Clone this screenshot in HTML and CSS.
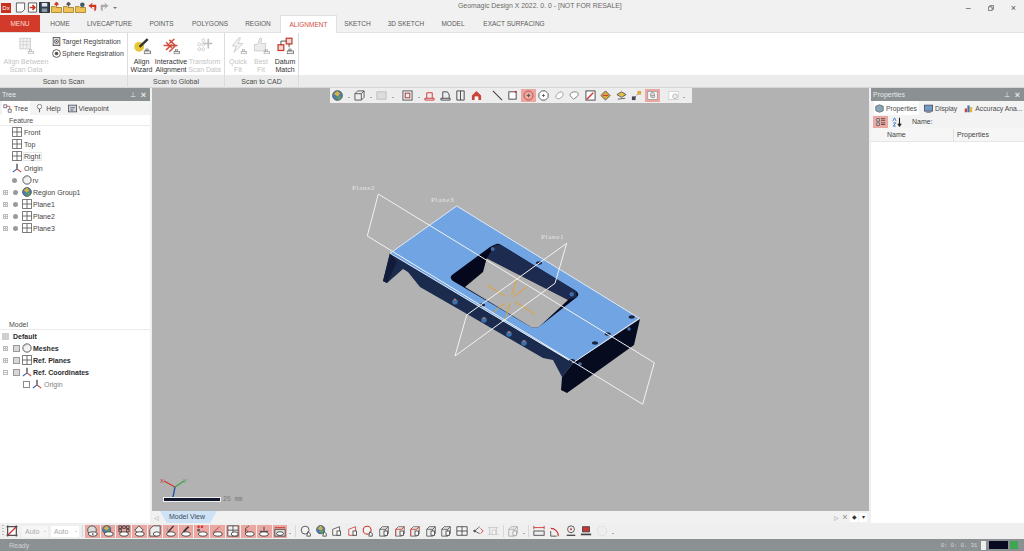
FILE: index.html
```html
<!DOCTYPE html>
<html lang="en">
<head>
<meta charset="utf-8">
<title>Geomagic Design X 2022</title>
<link rel="stylesheet" href="styles.css">
</head>
<body>
<svg class="defs" width="0" height="0" aria-hidden="true">
  <defs>
    <symbol id="plane" viewBox="0 0 12 12"><path d="M.5.5h11v11H.5zM6 .5v11M.5 6h11" fill="none" stroke="#555"/></symbol>
    <symbol id="origin" viewBox="0 0 12 12"><path d="M6 1v6" stroke="#222" stroke-width="1.300"/><path d="M6 7l-5 4" stroke="#2456b0" stroke-width="1.300"/><path d="M6 7l5 4" stroke="#c0392b" stroke-width="1.300"/></symbol>
    <symbol id="sphere" viewBox="0 0 12 12"><circle cx="6" cy="6" r="5" fill="#f2f2f2" stroke="#444"/><path d="M3 4a4 4 0 0 1 3-2" stroke="#aaa" fill="none"/></symbol>
    <symbol id="region" viewBox="0 0 12 12"><circle cx="6" cy="6" r="5.300" fill="#4a7fb0" stroke="#555"/><path d="M2 4l4-3 3 3-3 3z" fill="#d8b23a"/><path d="M5 8l4-2 1 3-3 2z" fill="#5fa05a"/></symbol>
    <symbol id="eye" viewBox="0 0 14 14"><circle cx="7" cy="6" r="5" fill="#ddd" stroke="#444"/><ellipse cx="8" cy="10.500" rx="5" ry="2.500" fill="#fff" stroke="#333"/><circle cx="8" cy="10.500" r="1" fill="#333"/></symbol>
    <symbol id="page" viewBox="0 0 14 14"><path d="M2 5l3-3h7v8l-3 3H2z" fill="#eee" stroke="#555"/><path d="M2 5h7v8M9 5l3-3" fill="none" stroke="#555"/><rect x="7" y="7" width="4" height="5" fill="#fff" stroke="#444"/></symbol>
    <symbol id="pager" viewBox="0 0 14 14"><path d="M2 5l3-3h7v8l-3 3H2z" fill="#eee" stroke="#666"/><path d="M2 5h7l3-3" fill="none" stroke="#d24a3c" stroke-width="1.200"/><path d="M2 5v8" stroke="#d24a3c"/><rect x="7" y="7" width="4" height="5" fill="#fff" stroke="#444"/></symbol>
    <symbol id="loop" viewBox="0 0 14 14"><circle cx="6" cy="6" r="4.600" fill="#f4f4f4" stroke="#444"/><path d="M9 8l3 2v3H8z" fill="#fff" stroke="#444"/></symbol>
    <symbol id="small" viewBox="0 0 10 8"><rect x="3" y=".5" width="3" height="3" fill="#ddd" stroke="#555"/><rect x=".5" y="3.500" width="9" height="4" fill="#eee" stroke="#555"/></symbol>
  </defs>
</svg>
<div class="app">
  <header class="titlebar">
    <div class="qat">
      <span class="logo">Dx</span>
      <svg class="qi" viewBox="0 0 12 12"><path d="M1.500 1h9v7l-3 3h-6z" fill="#fff" stroke="#555"/></svg>
      <svg class="qi" viewBox="0 0 12 12"><path d="M1.500 1h9v10h-9z" fill="#fff" stroke="#555"/><path d="M3 6h5M6 3.500 8.500 6 6 8.500" fill="none" stroke="#c8321f" stroke-width="1.800"/></svg>
      <svg class="qi" viewBox="0 0 12 12"><path d="M.5.500h11v11H.5z" fill="#2c3e50" stroke="#222"/><rect x="3" y="1" width="6" height="4" fill="#dfe6ee"/><rect x="3" y="7" width="6" height="4" fill="#8b98a5"/></svg>
      <svg class="qi" viewBox="0 0 12 12"><path d="M.5 5h4l1 1h6v5.500H.5z" fill="#eec257" stroke="#a9842b"/><path d="M6 5V1M4 3l2-2.500L8 3" fill="none" stroke="#cf3d24" stroke-width="1.600"/></svg>
      <svg class="qi" viewBox="0 0 12 12"><path d="M.5 5h4l1 1h6v5.500H.5z" fill="#eec257" stroke="#a9842b"/><path d="M6 5V1M4 3l2-2.500L8 3" fill="none" stroke="#555" stroke-width="1.600"/></svg>
      <svg class="qi" viewBox="0 0 12 12"><path d="M.5 5h4l1 1h6v5.500H.5z" fill="#eec257" stroke="#a9842b"/><circle cx="8" cy="3" r="2.500" fill="#45586a"/></svg>
      <svg class="qi" viewBox="0 0 12 12"><path d="M10 3H5L6.500.5 1.500 4l5 4L5 5.500h3V10c2 0 2.500-3 2-7z" fill="#d0341f"/></svg>
      <svg class="qi" viewBox="0 0 12 12"><path d="M2 3h5L5.500.5l5 3.500-5 4L7 5.500H4V10C2 10 1.500 7 2 3z" fill="#aaa"/></svg>
      <span class="qdrop"></span>
    </div>
    <div class="apptitle">Geomagic Design X 2022. 0. 0 - [NOT FOR RESALE]</div>
    <div class="winbtns">
      <span>–</span>
      <svg class="restore" viewBox="0 0 8 8"><path d="M.5 2.500h5v5h-5zM2.500 2.500v-2h5v5h-2" fill="none" stroke="#555"/></svg>
      <span>×</span>
    </div>
  </header>

  <nav class="tabs">
    <span class="tab tab-menu">MENU</span>
    <span class="tab t-home">HOME</span>
    <span class="tab t-live">LIVECAPTURE</span>
    <span class="tab t-points">POINTS</span>
    <span class="tab t-poly">POLYGONS</span>
    <span class="tab t-region">REGION</span>
    <span class="tab tab-active">ALIGNMENT</span>
    <span class="tab t-sketch">SKETCH</span>
    <span class="tab t-3d">3D SKETCH</span>
    <span class="tab t-model">MODEL</span>
    <span class="tab t-exact">EXACT SURFACING</span>
  </nav>

  <section class="ribbon">
    <div class="group g-scan">
      <div class="group-body">
        <div class="bigbtn disabled w-between">
          <svg class="bigicon" viewBox="0 0 22 22"><rect x="3.500" y="1.500" width="13" height="13" fill="#f2f2f2" stroke="#c8c8c8"/><path d="M3.500 5.500h13M3.500 9.500h13M7.500 1.500v13M12 1.500v13" stroke="#d2d2d2"/><use href="#small" x="13" y="15" width="8" height="6" opacity=".5"/></svg>
          <span>Align Between<br>Scan Data</span>
        </div>
        <div class="smallcol">
          <div class="smallbtn">
            <svg class="smicon" viewBox="0 0 12 12"><rect x="1.500" y=".5" width="9" height="11" fill="#ddd" stroke="#444"/><circle cx="6" cy="6" r="2.500" fill="#fff" stroke="#333"/><circle cx="6" cy="6" r="1" fill="#333"/></svg>
            <span>Target Registration</span>
          </div>
          <div class="smallbtn">
            <svg class="smicon" viewBox="0 0 12 12"><circle cx="6" cy="6" r="5.200" fill="#fff" stroke="#333"/><circle cx="6" cy="6" r="2.400" fill="#555"/></svg>
            <span>Sphere Registration</span>
          </div>
        </div>
      </div>
      <div class="group-label">Scan to Scan</div>
    </div>

    <div class="group g-global">
      <div class="group-body">
        <div class="bigbtn w-wizard">
          <svg class="bigicon" viewBox="0 0 22 22"><circle cx="7.500" cy="12" r="6" fill="#e8c736"/><path d="M8 12 18 2.500" stroke="#333" stroke-width="3"/><use href="#small" x="13" y="14" width="9" height="7"/></svg>
          <span>Align<br>Wizard</span>
        </div>
        <div class="bigbtn w-inter">
          <svg class="bigicon" viewBox="0 0 22 22"><g fill="none" stroke="#cf4a3c" stroke-width="1.800"><path d="M2 10.500h17M5 6.500 12 13M9 3.500 16 10M5 16 12 9M9 18l7-7M15 2.500 9 8"/></g><use href="#small" x="14" y="15" width="8" height="6"/></svg>
          <span>Interactive<br>Alignment</span>
        </div>
        <div class="bigbtn disabled w-transform">
          <svg class="bigicon" viewBox="0 0 22 22"><g fill="none" stroke="#c6c6c6"><circle cx="4" cy="9" r="1.800"/><circle cx="9" cy="9" r="1.800"/><circle cx="4" cy="15" r="1.800"/><circle cx="9" cy="15" r="1.800"/><circle cx="9" cy="4" r="1.800"/></g><path d="M15 2v12M9 8h11" stroke="#bdbdbd" stroke-width="2"/></svg>
          <span>Transform<br>Scan Data</span>
        </div>
      </div>
      <div class="group-label">Scan to Global</div>
    </div>

    <div class="group g-cad">
      <div class="group-body">
        <div class="bigbtn disabled w-quick">
          <svg class="bigicon" viewBox="0 0 22 22"><path d="M12 1 4 11h5l-3 8 11-11h-6l3-7z" fill="#f3f3f3" stroke="#c8c8c8"/><use href="#small" x="14" y="15" width="8" height="6" opacity=".6"/></svg>
          <span>Quick<br>Fit</span>
        </div>
        <div class="bigbtn disabled w-best">
          <svg class="bigicon" viewBox="0 0 22 22"><path d="M3 9h4l3-8 2 1-1 6h6l-1 9H3z" fill="#ececec" stroke="#c8c8c8"/><use href="#small" x="14" y="15" width="8" height="6" opacity=".6"/></svg>
          <span>Best<br>Fit</span>
        </div>
        <div class="bigbtn w-datum">
          <svg class="bigicon" viewBox="0 0 22 22"><rect x="12.500" y="1.500" width="7" height="7" fill="#f1d9d5" stroke="#c9382a" stroke-width="1.500"/><rect x="2.500" y="9.500" width="7" height="7" fill="#f1d9d5" stroke="#c9382a" stroke-width="1.500"/><path d="M6 9.500V5h6.500M16 8.500v4" fill="none" stroke="#333"/><use href="#small" x="13" y="14" width="9" height="7"/></svg>
          <span>Datum<br>Match</span>
        </div>
      </div>
      <div class="group-label">Scan to CAD</div>
    </div>
    <div class="group g-rest">
      <div class="group-body"></div>
      <div class="group-label"></div>
    </div>
  </section>

  <main class="workspace">
    <aside class="panel panel-left">
      <div class="panel-head"><span>Tree</span><span class="pin">⊥</span><span class="close">×</span></div>
      <div class="panel-tabs">
        <span class="ptab ptab-on"><svg class="pti" viewBox="0 0 12 12"><path d="M1 1h4v4H1zM7 7h4v4H7z" fill="#fff" stroke="#556"/><path d="M5 3h4v4" stroke="#c0392b" fill="none"/></svg>Tree</span>
        <span class="ptab"><svg class="pti" viewBox="0 0 12 12"><circle cx="6" cy="3.500" r="3" fill="#fff" stroke="#666"/><path d="M6 6.500V11" stroke="#666" stroke-width="1.500"/></svg>Help</span>
        <span class="ptab"><svg class="pti" viewBox="0 0 12 12"><rect x=".5" y="1.500" width="11" height="9" fill="#cfd6dc" stroke="#445"/><path d="M3 5h6M3 8h4" stroke="#445"/></svg>Viewpoint</span>
      </div>
      <div class="sec-head">Feature</div>
      <ul class="tree">
        <li class="ind1"><svg class="ti"><use href="#plane"/></svg>Front</li>
        <li class="ind1"><svg class="ti"><use href="#plane"/></svg>Top</li>
        <li class="ind1"><svg class="ti"><use href="#plane"/></svg><span class="sel">Right</span></li>
        <li class="ind1"><svg class="ti"><use href="#origin"/></svg>Origin</li>
        <li class="ind2"><i class="dot"></i><svg class="ti"><use href="#sphere"/></svg>rv</li>
        <li><i class="plus"></i><i class="dot"></i><svg class="ti"><use href="#region"/></svg>Region Group1</li>
        <li><i class="plus"></i><i class="dot"></i><svg class="ti"><use href="#plane"/></svg>Plane1</li>
        <li><i class="plus"></i><i class="dot"></i><svg class="ti"><use href="#plane"/></svg>Plane2</li>
        <li><i class="plus"></i><i class="dot"></i><svg class="ti"><use href="#plane"/></svg>Plane3</li>
      </ul>
      <div class="sec-head sec-model">Model</div>
      <ul class="tree tree-model">
        <li class="bold"><i class="box"></i>Default</li>
        <li class="bold"><i class="plus"></i><i class="vis"></i><svg class="ti"><use href="#sphere"/></svg>Meshes</li>
        <li class="bold"><i class="plus"></i><i class="vis"></i><svg class="ti"><use href="#plane"/></svg>Ref. Planes</li>
        <li class="bold"><i class="plus minus"></i><i class="vis"></i><svg class="ti"><use href="#origin"/></svg>Ref. Coordinates</li>
        <li class="dim"><i class="check"></i><svg class="ti"><use href="#origin"/></svg>Origin</li>
      </ul>
    </aside>

    <div class="center">
      <div class="viewport">
        <svg class="scene" viewBox="152 88 717 423" preserveAspectRatio="none">
          <!-- front wall -->
          <path d="M390 253 573 363 562 377 553 360 543 358 467 314 420 287 408 272 403 269 387 283 383 281Z" fill="#1b2b4e"/>
          <path d="M383 281 390 253 397 262 387 283Z" fill="#121c3a"/>
          <!-- right dark leg -->
          <path d="M573 363 640 319 634 345 567 393 561 390 562 377Z" fill="#070b20"/>
          <!-- top face -->
          <path d="M456.700 206 639.300 318.300 573.300 362.700 390 253.300Z" fill="#70a4e2"/>
          <!-- window -->
          <path d="M495 244.500Q498 243 501 245L576 291Q580 294 577 297L540 326Q536 329 531 327L453 281Q449 278 452 275L490 247Z" fill="#05081c"/>
          <path d="M495 245 501 245 576 291 577 297 568 300 487 258Z" fill="#1e2b50"/>
          <path d="M486.700 258.300 568 300 540 326Q536 329 531 327L465 287 483 272Z" fill="#b2b2b2"/>
          <!-- edges of top face -->
          <path d="M456.700 206 639.300 318.300 573.300 362.700 390 253.300Z" fill="none" stroke="#eaf1fa" stroke-width=".9"/>
          <!-- holes -->
          <g fill="#1a2340"><ellipse cx="539" cy="263" rx="3" ry="1.700"/><ellipse cx="482" cy="305" rx="3" ry="1.700"/><ellipse cx="631.700" cy="317" rx="3" ry="1.700"/><ellipse cx="607.700" cy="334" rx="3" ry="1.700"/><ellipse cx="595" cy="343" rx="3" ry="1.700"/><ellipse cx="572" cy="360.700" rx="3" ry="1.700"/></g>
          <g fill="#3f6fa8"><circle cx="492.700" cy="249" r="2"/><circle cx="571.700" cy="294.300" r="2.200"/><circle cx="455" cy="301.700" r="2.800"/><circle cx="484" cy="320" r="2.800"/><circle cx="509" cy="334" r="2.800"/><circle cx="524" cy="343" r="2.800"/><circle cx="580" cy="364" r="1.800"/><circle cx="629" cy="329" r="1.800"/></g>
          <g fill="#d9704a"><circle cx="455" cy="299.500" r="1"/><circle cx="484" cy="318" r="1"/><circle cx="509" cy="332" r="1"/><circle cx="524" cy="341" r="1"/></g>
          <!-- orange axis marks -->
          <g stroke="#e6a22e" stroke-width="1" fill="none">
            <path d="M486.700 285 505 296M515 301.700 535 314.300M527.300 286.700 513.300 296.700M505 303.300 493.300 312.300M517.300 276.700 511.700 295M510 303.300 505 320"/>
          </g>
          <!-- plane outlines -->
          <g fill="none" stroke="#f2f2f2" stroke-width="1">
            <path d="M378.300 194 654.300 362.700 642.700 404.300 367.300 236Z"/>
            <path d="M566.700 243.300 466.700 315 455 356 555 283.300Z"/>
          </g>
          <g class="plane-label">
            <text x="352" y="190">Plane2</text>
            <text x="431" y="202">Plane3</text>
            <text x="541" y="239">Plane1</text>
          </g>
          <!-- triad -->
          <g fill="none" stroke-width="1.300">
            <path d="M175 487 164 481" stroke="#d0392b"/><path d="M175 487 184 481" stroke="#3fa14a"/><path d="M175 487 172 502" stroke="#1f4fa8"/>
          </g>
          <g class="triad"><text x="160" y="483" fill="#c8392b">X</text><text x="183" y="483" fill="#3a9a46">Y</text></g>
          <rect x="163.500" y="497.500" width="57" height="4" fill="#13172c" stroke="#eee" stroke-width="1"/>
          <text class="scale" x="223" y="501">25 mm</text>
        </svg>
        <div class="viewbar">
          <span class="vb vb-sphere"><svg viewBox="0 0 12 12"><use href="#region"/></svg></span><i class="dr"></i>
          <span class="vb"><svg viewBox="0 0 12 12"><path d="M1 4l3-3h7v7l-3 3H1zM1 4h7v7M8 4l3-3" fill="#eee" stroke="#555"/></svg></span><i class="dr"></i>
          <span class="vb"><svg viewBox="0 0 12 12"><rect x="1" y="2" width="10" height="8" fill="#ddd" stroke="#bbb"/></svg></span><i class="dr dr-wide"></i>
          <span class="vb"><svg viewBox="0 0 12 12"><rect x="1" y="1" width="10" height="10" fill="#eee" stroke="#555"/><rect x="3.500" y="3.500" width="5" height="5" fill="none" stroke="#a33"/></svg></span><i class="dr"></i>
          <span class="vb"><svg viewBox="0 0 12 12"><path d="M1 9h10v2H1zM3 9V3h6v6" fill="none" stroke="#c33"/></svg></span>
          <span class="vb"><svg viewBox="0 0 12 12"><path d="M1 9h10v2H1zM3 9V2h5l2 3v4" fill="none" stroke="#444"/></svg></span>
          <span class="vb"><svg viewBox="0 0 12 12"><path d="M2 1h8v10H2zM6 1v10" fill="#eee" stroke="#444"/></svg></span>
          <span class="vb vb-gap"><svg viewBox="0 0 12 12"><path d="M6 1l5 5v5H1V6z" fill="#c9453a"/><path d="M4 7h4v4H4z" fill="#fff"/></svg></span>
          <span class="vb"><svg viewBox="0 0 12 12"><path d="M1 1l10 10" stroke="#444" stroke-width="1.200"/></svg></span>
          <span class="vb"><svg viewBox="0 0 12 12"><rect x="2" y="2" width="8" height="8" fill="#fff" stroke="#444"/><rect x="8.500" y="1" width="2" height="2" fill="#c33"/></svg></span>
          <span class="vb vb-on"><svg viewBox="0 0 12 12"><circle cx="6" cy="6" r="5" fill="none" stroke="#c0483c"/><path d="M4 6h4M6 4v4" stroke="#555"/></svg></span>
          <span class="vb"><svg viewBox="0 0 12 12"><path d="M4 1h4l3 3v4l-3 3H4L1 8V4z" fill="#fff" stroke="#555"/><path d="M4.500 6h3M6 4.500v3" stroke="#555"/></svg></span>
          <span class="vb"><svg viewBox="0 0 12 12"><path d="M2 8c0-3 3-6 6-6 3 1 2 5 0 6-2 2-5 2-6 0z" fill="#fff" stroke="#999"/></svg></span>
          <span class="vb"><svg viewBox="0 0 12 12"><path d="M1 6c0-3 3-4 6-4s4 3 2 5l-4 3z" fill="#fff" stroke="#777"/></svg></span>
          <span class="vb"><svg viewBox="0 0 12 12"><rect x="1" y="1" width="10" height="10" fill="#fff" stroke="#444"/><path d="M2 10l7-7" stroke="#c33" stroke-width="1.500"/></svg></span>
          <span class="vb"><svg viewBox="0 0 12 12"><path d="M6 1l5 5-5 5-5-5z" fill="#d9a93a" stroke="#555"/><path d="M3 6h6" stroke="#c33"/></svg></span>
          <span class="vb"><svg viewBox="0 0 12 12"><path d="M1 5l5-3 5 3-5 3z" fill="#e4c04a" stroke="#555"/><path d="M2 10l8-1" stroke="#555"/></svg></span>
          <span class="vb"><svg viewBox="0 0 12 12"><path d="M2 10 10 2" stroke="#777" stroke-dasharray="2 1"/><rect x="7" y="1" width="4" height="4" fill="#d9a93a"/><rect x="1" y="7" width="4" height="4" fill="#445"/></svg></span>
          <span class="vb vb-on vb-gap"><svg viewBox="0 0 14 14"><rect x="1" y="2" width="12" height="10" fill="#fff" stroke="#999"/><use href="#eye" x="3" y="2" width="8" height="9"/></svg></span>
          <span class="vb"><svg viewBox="0 0 14 14"><rect x="1" y="2" width="12" height="10" fill="#fff" stroke="#ccc"/><circle cx="9" cy="8" r="3" fill="#eee" stroke="#aaa"/></svg></span><i class="dr"></i>
        </div>
      </div>
      <div class="viewtabs">
        <span class="vt-left">◁</span>
        <span class="vt-tab">Model View</span>
        <span class="vt-right">
          <span class="vt-arrow">▷</span><span class="vt-x">×</span><span class="vt-mini">◆</span><span class="vt-mini">▾</span>
        </span>
      </div>
    </div>

    <aside class="panel panel-right">
      <div class="panel-head"><span>Properties</span><span class="pin">⊥</span><span class="close">×</span></div>
      <div class="panel-tabs pr-tabs">
        <span class="ptab ptab-on"><svg class="pti" viewBox="0 0 12 12"><path d="M1 3l5-2 5 2v6l-5 2-5-2z" fill="#8aa5b8" stroke="#566"/></svg>Properties</span>
        <span class="ptab"><svg class="pti" viewBox="0 0 12 12"><rect x=".5" y="1.500" width="11" height="8" fill="#6f9bc4" stroke="#445"/><path d="M3 11h6" stroke="#445"/></svg>Display</span>
        <span class="ptab"><svg class="pti" viewBox="0 0 12 12"><rect x="1" y="6" width="3" height="5" fill="#c9453a"/><rect x="4.500" y="2" width="3" height="9" fill="#3f74b9"/><rect x="8" y="4" width="3" height="7" fill="#e3b93a"/></svg>Accuracy Ana...</span>
      </div>
      <div class="prop-tools">
        <span class="pt-on"><svg viewBox="0 0 12 12"><path d="M1 2h3v3H1zM1 7h3v3H1zM6 2h5M6 4h5M6 7h5M6 9h5" fill="#fff" stroke="#444"/></svg></span>
        <span class="pt-sort"><svg viewBox="0 0 12 12"><path d="M1 5 3 1l2 4M1.500 7h3l-3 4h3" fill="none" stroke="#2a6fc0"/><path d="M9 1v9M7 8l2 3 2-3" fill="none" stroke="#222" stroke-width="1.300"/></svg></span>
        <span class="pt-name">Name:</span>
      </div>
      <div class="prop-head"><span class="ph-name">Name</span><span class="ph-prop">Properties</span></div>
      <div class="prop-body"></div>
    </aside>
  </main>

  <div class="bottombar">
    <i class="grip"></i>
    <span class="bb"><svg viewBox="0 0 14 14"><rect x="2" y="2" width="10" height="10" fill="#fff" stroke="#333"/><path d="M2 12 12 2" stroke="#c33" stroke-width="1.500"/><path d="M0 2h14M2 0v14M0 12h14M12 0v14" stroke="#333" stroke-width=".6"/></svg></span>
    <span class="combo combo1">Auto<i></i></span>
    <span class="combo combo2">Auto<i></i></span>
    <i class="sep"></i>
    <div class="pinkset">
      <span class="bp"><svg viewBox="0 0 14 14"><use href="#eye"/></svg></span>
      <span class="bp"><svg viewBox="0 0 14 14"><use href="#region" width="11" height="11"/><ellipse cx="8" cy="10.500" rx="5" ry="2.500" fill="#fff" stroke="#333"/></svg></span>
      <span class="bp"><svg viewBox="0 0 14 14"><path d="M1 1h3v3H1zM5.500 1h3v3h-3zM10 1h3v3h-3zM1 5h3v3H1zM10 5h3v3h-3z" fill="none" stroke="#333"/><ellipse cx="7" cy="10.500" rx="5" ry="2.500" fill="#fff" stroke="#333"/></svg></span>
      <span class="bp"><svg viewBox="0 0 14 14"><path d="M2 6l5-5 5 5-5 4z" fill="#eee" stroke="#444"/><ellipse cx="8" cy="10.500" rx="5" ry="2.500" fill="#fff" stroke="#333"/></svg></span>
      <span class="bp"><svg viewBox="0 0 14 14"><path d="M1 5l4-4h8v9l-4 3H1z" fill="#eee" stroke="#444"/><ellipse cx="9" cy="10.500" rx="4" ry="2.500" fill="#fff" stroke="#333"/></svg></span>
      <span class="bp"><svg viewBox="0 0 14 14"><path d="M3 9l7-8" stroke="#333" stroke-width="1.500"/><path d="M3 3v6" stroke="#999"/><ellipse cx="7" cy="10.500" rx="5" ry="2.500" fill="#fff" stroke="#333"/></svg></span>
      <span class="bp"><svg viewBox="0 0 14 14"><path d="M4 8l6-6" stroke="#333" stroke-width="2"/><ellipse cx="7" cy="10.500" rx="5" ry="2.500" fill="#fff" stroke="#333"/></svg></span>
      <span class="bp"><svg viewBox="0 0 14 14"><circle cx="3" cy="2" r="1.500" fill="#c33"/><circle cx="7" cy="2" r="1.500" fill="#c33"/><circle cx="3" cy="6" r="1.500" fill="#555"/><ellipse cx="8" cy="10.500" rx="5" ry="2.500" fill="#fff" stroke="#333"/></svg></span>
      <span class="bp"><svg viewBox="0 0 14 14"><path d="M2 9l8-7" stroke="#a44"/><ellipse cx="8" cy="10.500" rx="5" ry="2.500" fill="#fff" stroke="#333"/></svg></span>
      <span class="bp"><svg viewBox="0 0 14 14"><path d="M1 1h12v12H1zM7 1v12M1 6h12" fill="#f4f4f4" stroke="#444"/><ellipse cx="9" cy="10.500" rx="4" ry="2.500" fill="#fff" stroke="#333"/></svg></span>
      <span class="bp"><svg viewBox="0 0 14 14"><path d="M3 9V4l4-3" fill="none" stroke="#444"/><path d="M3 5l3 3" stroke="#a33"/><ellipse cx="8" cy="10.500" rx="5" ry="2.500" fill="#fff" stroke="#333"/></svg></span>
      <span class="bp"><svg viewBox="0 0 14 14"><path d="M7 2v6M2 7l5 1 5-1" fill="none" stroke="#333"/><ellipse cx="7" cy="10.500" rx="5" ry="2.500" fill="#fff" stroke="#333"/></svg></span>
      <span class="bp"><svg viewBox="0 0 14 14"><path d="M1 3h12" stroke="#c33"/><rect x="1" y="5" width="12" height="8" fill="#ddd" stroke="#444"/><ellipse cx="7" cy="10" rx="4" ry="2.200" fill="#fff" stroke="#333"/></svg></span>
    </div>
    <i class="dr dr-b"></i>
    <i class="sep sep-2"></i>
    <div class="toolset">
      <span class="bb"><svg viewBox="0 0 14 14"><use href="#loop"/></svg></span>
      <span class="bb"><svg viewBox="0 0 14 14"><use href="#region" width="11" height="11"/><path d="M9 8l3 2v3H8z" fill="#fff" stroke="#444"/></svg></span>
      <span class="bb"><svg viewBox="0 0 14 14"><path d="M2 12V5l8-3v10z" fill="#f4f4f4" stroke="#555"/><rect x="7" y="7" width="4" height="5" fill="#fff" stroke="#444"/></svg></span>
      <span class="bb"><svg viewBox="0 0 14 14"><path d="M2 12V5l8-3v10z" fill="#f4f4f4" stroke="#c44"/><rect x="7" y="7" width="4" height="5" fill="#fff" stroke="#444"/></svg></span>
      <span class="bb"><svg viewBox="0 0 14 14"><circle cx="6" cy="6" r="4.600" fill="#f4f4f4" stroke="#c9382a" stroke-width="1.300"/><path d="M9 8l3 2v3H8z" fill="#fff" stroke="#444"/></svg></span>
      <span class="bb"><svg viewBox="0 0 14 14"><use href="#page"/></svg></span>
      <span class="bb"><svg viewBox="0 0 14 14"><use href="#pager"/></svg></span>
      <span class="bb"><svg viewBox="0 0 14 14"><use href="#pager"/></svg></span>
      <span class="bb"><svg viewBox="0 0 14 14"><use href="#page"/></svg></span>
      <span class="bb"><svg viewBox="0 0 14 14"><use href="#page"/></svg></span>
      <span class="bb"><svg viewBox="0 0 14 14"><path d="M1 2h12v10H1zM7 2v10M1 7h12" fill="#f4f4f4" stroke="#444"/></svg></span>
      <span class="bb"><svg viewBox="0 0 14 14"><path d="M3 7l6-5M3 7l6 3" stroke="#555"/><path d="M10 4l3 3-3 3" stroke="#c33" fill="none"/><circle cx="3" cy="7" r="1.500" fill="#555"/></svg></span>
      <span class="bb bb-faint"><svg viewBox="0 0 14 14"><path d="M1 3h12M3 3v8M11 3v8M1 11h12" fill="none" stroke="#999"/><rect x="6" y="6" width="4" height="5" fill="#fff" stroke="#aaa"/></svg></span>
      <i class="sep sep-in"></i>
      <span class="bb bb-faint"><svg viewBox="0 0 14 14"><use href="#page"/></svg></span>
      <i class="dr dr-b"></i>
      <i class="sep sep-in2"></i>
      <span class="bb"><svg viewBox="0 0 14 14"><path d="M1 1v4M13 1v4M1 3h12" stroke="#c33" fill="none"/><rect x="1" y="7" width="12" height="5" fill="#eee" stroke="#444"/></svg></span>
      <span class="bb"><svg viewBox="0 0 14 14"><path d="M2 4a9 9 0 0 1 9 9" fill="none" stroke="#c33" stroke-width="1.300"/><path d="M2 7v6h7" fill="#eee" stroke="#444"/></svg></span>
      <span class="bb"><svg viewBox="0 0 14 14"><circle cx="7" cy="5" r="4" fill="#eee" stroke="#444"/><circle cx="7" cy="5" r="1.200" fill="#c33"/><path d="M2 12h10" stroke="#444" stroke-width="1.500"/></svg></span>
      <span class="bb"><svg viewBox="0 0 14 14"><rect x="3" y="2" width="8" height="6" fill="#c33" stroke="#444"/><path d="M1 11h12" stroke="#444" stroke-width="2"/></svg></span>
      <span class="bb bb-faint"><svg viewBox="0 0 14 14"><circle cx="7" cy="7" r="5.500" fill="#eee" stroke="#bbb" stroke-dasharray="2 1"/></svg></span>
      <i class="dr dr-b"></i>
    </div>
  </div>

  <footer class="status">
    <span class="ready">Ready</span>
    <span class="time">0: 0: 0. 31</span>
    <i class="swatch-w"></i>
    <i class="swatch-k"></i>
    <i class="swatch-g"></i>
  </footer>
</div>
</body>
</html>
```
FILE: styles.css
```css
* { box-sizing: border-box; }
html, body { margin: 0; padding: 0; width: 1024px; height: 551px; overflow: hidden; }
body { font-family: "Liberation Sans", Arial, sans-serif; font-size: 7px; color: #3c3c3c; background: #f0f0f0; }
.defs { position: absolute; }
i { display: block; font-style: normal; }
.app { display: flex; flex-direction: column; width: 1024px; height: 551px; }

/* title bar */
.titlebar { position: relative; display: flex; align-items: center; height: 15px; background: #f1f1f1; flex: none; }
.qat { display: flex; align-items: center; gap: 1px; padding-left: 1px; }
.logo { width: 10px; height: 10px; background: #c9301e; color: #fff; font-size: 6px; line-height: 10px; text-align: center; margin-right: 3px; }
.qi { width: 11px; height: 11px; }
.qdrop { width: 0; height: 0; border: 2px solid transparent; border-top-color: #777; margin: 3px 0 0 2px; }
.apptitle { position: absolute; left: 458px; top: 1px; font-size: 6.900px; line-height: 10px; color: #6a6a6a; white-space: nowrap; }
.winbtns { margin-left: auto; display: flex; align-items: center; gap: 17px; padding-right: 8px; font-size: 9px; color: #555; }
.restore { width: 6px; height: 6px; }

/* tabs */
.tabs { display: flex; height: 18px; flex: none; background: #f1f1f1; border-bottom: 1px solid #e2e2e2; font-size: 6.500px; line-height: 18px; }
.tab { color: #5a5a5a; text-align: center; flex: none; white-space: nowrap; }
.tab-menu { width: 40px; background: #d23a2a; color: #fbdcd8; }
.t-home { width: 40px; }
.t-live { width: 59px; }
.t-points { width: 45px; }
.t-poly { width: 52px; }
.t-region { width: 44px; }
.tab-active { width: 57px; background: #fff; color: #d1503f; border: 1px solid #e0e0e0; border-bottom: none; line-height: 17px; height: 18px; }
.t-sketch { width: 41px; }
.t-3d { width: 56px; }
.t-model { width: 38px; }
.t-exact { width: 84px; }

/* ribbon */
.ribbon { display: flex; height: 55px; flex: none; }
.group { display: flex; flex-direction: column; border-right: 1px solid #dcdcdc; flex: none; }
.group-body { height: 42px; background: #fff; display: flex; }
.group-label { height: 13px; background: #ebebeb; text-align: center; line-height: 13px; font-size: 7px; color: #4a4a4a; border-bottom: 1px solid #d6d6d6; }
.g-scan { width: 128px; }
.g-global { width: 97px; }
.g-cad { width: 74px; }
.g-rest { flex: 1; border-right: none; }
.bigbtn { display: flex; flex-direction: column; align-items: center; text-align: center; line-height: 8px; font-size: 7px; color: #333; flex: none; padding-top: 4px; white-space: nowrap; }
.bigbtn span { margin-top: 3px; }
.bigicon { width: 18px; height: 18px; flex: none; }
.disabled { color: #c4c4c4; }
.w-between { width: 48px; margin-left: 2px; }
.w-wizard { width: 25px; margin-left: 1px; }
.w-inter { width: 34px; }
.w-transform { width: 33px; }
.w-quick { width: 24px; margin-left: 1px; }
.w-best { width: 22px; }
.w-datum { width: 26px; }
.smallcol { display: flex; flex-direction: column; padding: 4px 0 0 2px; gap: 3px; }
.smallbtn { display: flex; align-items: center; gap: 1px; font-size: 7px; line-height: 9px; color: #444; white-space: nowrap; }
.smicon { width: 9px; height: 9px; flex: none; }

/* workspace */
.workspace { display: flex; flex: 1; min-height: 0; }
.panel { background: #fff; display: flex; flex-direction: column; flex: none; }
.panel-left { width: 150px; }
.panel-right { width: 153px; }
.center { flex: 1; margin: 0 2px; display: flex; flex-direction: column; min-width: 0; }
.panel-head { display: flex; align-items: center; height: 13px; background: #8b9093; color: #e8e8e8; font-size: 7px; padding: 0 4px 0 2px; flex: none; }
.pin { margin-left: auto; font-size: 7px; margin-right: 5px; }
.close { font-size: 9px; font-weight: bold; }
.panel-tabs { display: flex; height: 14px; align-items: center; background: #f3f3f3; gap: 4px; padding-left: 2px; flex: none; font-size: 7px; }
.ptab { display: flex; align-items: center; gap: 2px; color: #4a4a4a; height: 14px; padding: 0 2px 0 1px; white-space: nowrap; }
.ptab-on { background: #fff; }
.pti { width: 9px; height: 9px; flex: none; }
.sec-head { height: 11px; line-height: 11px; padding-left: 9px; font-size: 7px; color: #4c4c4c; background: #fff; border-bottom: 1px solid #ececec; flex: none; }
.tree { list-style: none; margin: 0; padding: 0; font-size: 7px; color: #444; flex: none; }
.tree li { display: flex; align-items: center; height: 12px; white-space: nowrap; }
.ti { width: 10px; height: 10px; margin-right: 1px; flex: none; }
.ind1 { padding-left: 12px; }
.ind1 .ti { margin-right: 2px; }
.ind2 { padding-left: 12px; }
.sel { border: 1px solid #e8e8e8; margin: -1px; padding: 0 1px 0 0; }
.dot { width: 5px; height: 5px; border-radius: 50%; background: #9a9a9a; margin-right: 4.500px; flex: none; }
.plus { width: 5px; height: 5px; border: 1px solid #bbb; margin: 0 4.500px 0 3px; flex: none; background: linear-gradient(#bbb, #bbb) center / 3px 1px no-repeat, linear-gradient(#bbb, #bbb) center / 1px 3px no-repeat; }
.minus { background: linear-gradient(#bbb, #bbb) center / 3px 1px no-repeat; }
.sec-model { margin-top: 85px; }
.bold { font-weight: bold; color: #2b2b2b; }
.box { width: 7px; height: 7px; background: #cfcfcf; margin: 0 4px 0 2px; flex: none; }
.vis { width: 7px; height: 7px; border: 1px solid #999; background: #d8d8d8; margin-right: 2.500px; flex: none; }
.dim { color: #7f7f7f; padding-left: 23px; }
.dim .ti { margin-right: 2px; }
.check { width: 7px; height: 7px; border: 1px solid #8a8a8a; background: #fff; margin-right: 2px; flex: none; }

/* viewport */
.viewport { position: relative; flex: 1; background: #b2b2b2; min-height: 0; }
.scene { display: block; width: 717px; height: 423px; }
.plane-label text { font-family: "Liberation Serif", serif; font-size: 7px; letter-spacing: .7px; fill: #e6e6e6; }
.triad text { font-family: "Liberation Sans", sans-serif; font-size: 6px; }
.scale { font-family: "Liberation Mono", monospace; font-size: 6.500px; fill: #777; }
.viewbar { position: absolute; left: 178px; top: 0; width: 362px; height: 15px; background: #ededed; display: flex; align-items: center; }
.vb { display: flex; align-items: center; justify-content: center; width: 15.500px; height: 13px; flex: none; }
.vb svg { width: 11px; height: 11px; }
.vb-on { background: #eba8a2; }
.vb-gap { margin-right: 5.500px; }
.dr { width: 0; height: 0; border: 1.500px solid transparent; border-top-color: #666; margin: 5px 2.500px 0 2px; flex: none; }
.dr-wide { margin-right: 6.500px; }
.viewtabs { display: flex; align-items: center; height: 12px; background: #f1f1f1; font-size: 7px; flex: none; color: #555; }
.vt-left { width: 8px; font-size: 6px; text-align: center; color: #999; }
.vt-tab { width: 57px; height: 12px; line-height: 12px; padding-right: 3px; text-align: center; color: #3c4a57; background: #cfe3f6; clip-path: polygon(0 0, 100% 0, 88% 100%, 12% 100%); }
.vt-right { margin-left: auto; display: flex; align-items: center; gap: 1px; padding-right: 2px; }
.vt-arrow { font-size: 6px; width: 8px; color: #888; text-align: center; }
.vt-x { font-size: 9px; width: 8px; color: #888; text-align: center; line-height: 9px; }
.vt-mini { width: 8px; height: 9px; background: #fff; font-size: 6px; line-height: 9px; text-align: center; color: #333; }

/* properties */
.pr-tabs { gap: 4px; padding-left: 3px; font-size: 6.800px; }
.pr-tabs .ptab:last-child { padding-right: 0; }
.prop-tools { display: flex; align-items: center; height: 13px; background: #f3f3f3; padding-left: 2px; flex: none; }
.prop-tools svg { width: 10px; height: 10px; display: block; }
.pt-on { background: #eba8a2; width: 15px; height: 12px; display: flex; align-items: center; justify-content: center; }
.pt-sort { width: 10px; margin-left: 4px; }
.pt-name { margin-left: 10px; font-size: 7px; color: #444; }
.prop-head { display: flex; height: 14px; line-height: 14px; font-size: 7px; color: #444; background: #f6f6f6; border-bottom: 1px solid #e6e6e6; flex: none; }
.ph-name { width: 83px; padding-left: 16px; border-right: 1px solid #e0e0e0; height: 12px; line-height: 12px; margin-top: 1px; }
.ph-prop { padding-left: 3px; }
.prop-body { flex: 1; }

/* bottom toolbar */
.bottombar { display: flex; align-items: center; height: 16px; background: #efefef; flex: none; }
.grip { width: 2px; height: 12px; margin: 0 0 0 2px; background: repeating-linear-gradient(#bbb 0 1px, transparent 1px 3px); flex: none; }
.bb { display: flex; align-items: center; justify-content: center; width: 15.600px; height: 14px; flex: none; }
.bb svg { width: 12px; height: 12px; }
.bb-faint { opacity: .45; }
.combo { display: flex; align-items: center; justify-content: space-between; width: 26px; height: 11px; margin-left: 2.400px; padding: 0 2px 0 3px; background: #f6f6f6; color: #aaa; font-size: 7px; flex: none; }
.combo i { width: 0; height: 0; border: 1.500px solid transparent; border-top-color: #aaa; margin-top: 2px; }
.combo2 { width: 28px; background: #fff; margin-left: 3px; }
.sep { width: 1px; height: 12px; background: #d8d8d8; margin: 0 2px 0 3px; flex: none; }
.sep-2 { margin-left: 2px; }
.sep-in { margin: 0 1px 0 2px; }
.sep-in2 { margin: 0 3px 0 1px; }
.pinkset { display: flex; gap: 1px; flex: none; }
.bp { display: flex; align-items: center; justify-content: center; width: 14.650px; height: 13px; background: #eba8a2; flex: none; }
.bp svg { width: 12px; height: 12px; }
.dr-b { margin: 6px 2px 0 2px; }
.toolset { display: flex; align-items: center; flex: none; }

/* status */
.status { display: flex; align-items: center; height: 12px; background: #8b9093; color: #d0d3d5; font-size: 7px; flex: none; padding-left: 9px; }
.time { margin-left: auto; font-family: "Liberation Mono", monospace; font-size: 6px; letter-spacing: -.3px; margin-right: 4px; }
.swatch-w { width: 5px; height: 9px; background: #eee; margin-right: 3px; flex: none; }
.swatch-k { width: 19px; height: 8px; background: #070a20; margin-right: 2px; flex: none; }
.swatch-g { width: 8px; height: 8px; background: #3fa552; margin-right: 6px; flex: none; }
```
